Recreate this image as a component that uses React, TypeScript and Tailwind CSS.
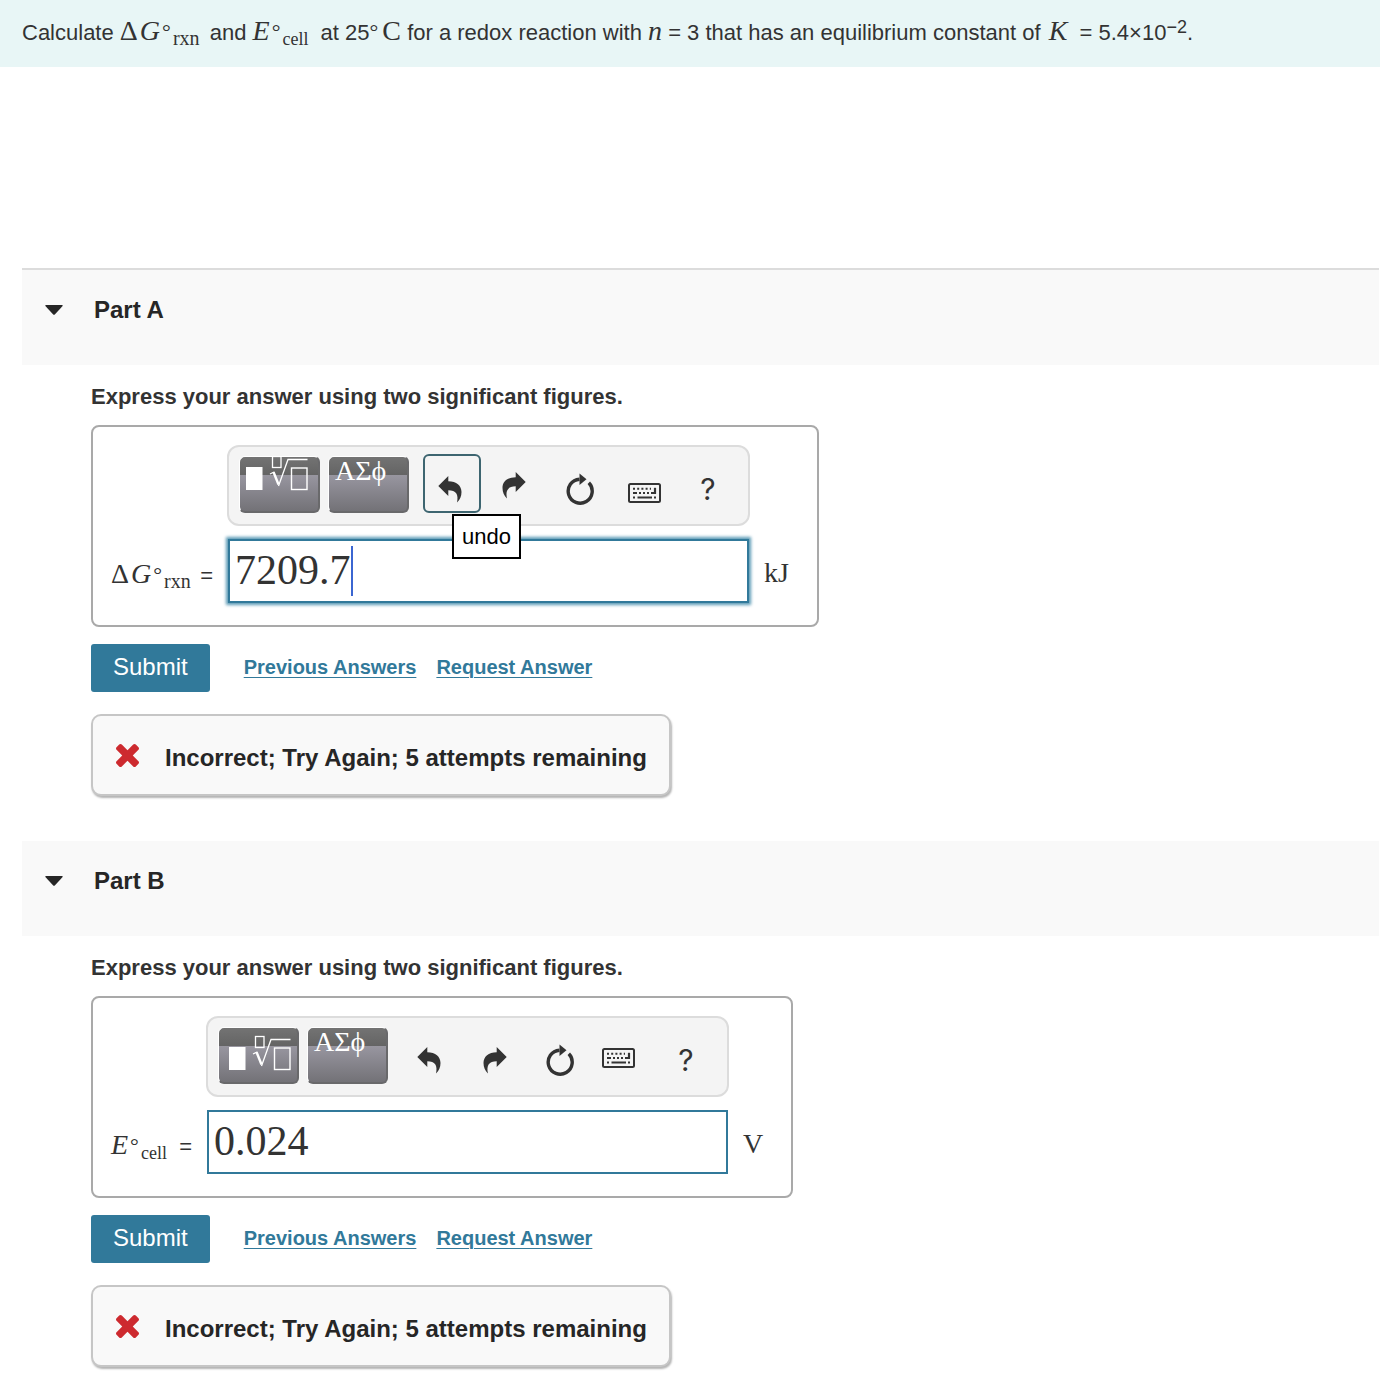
import React, { useState } from 'react';
import clsx from 'clsx';

interface Part {
  id: string;
  title: string;
  symbol: React.ReactNode;
  labelWidth: string;
  unit: string;
  answer: string;
  focused: boolean;
  toolGrid: string;
  redoPad: string;
  keyboardPad: string;
  templateAlign: string;
}

// ================= MATH =================
const Degree = () => <span className="align-[1px] text-[22px] leading-none">°</span>;

const DeltaG = () => (
  <span className="font-['Liberation_Serif',serif] text-[28px] leading-none whitespace-nowrap">
    <span className="mr-0.5">Δ</span>
    <i className="mr-0.5">G</i>
    <Degree />
    <span className="ml-0.5 align-[-5px] text-xl leading-none">rxn</span>
  </span>
);

const ECell = () => (
  <span className="font-['Liberation_Serif',serif] text-[28px] leading-none whitespace-nowrap">
    <i className="mr-0.5">E</i>
    <Degree />
    <span className="ml-0.5 align-[-5px] text-lg leading-none">cell</span>
  </span>
);

const Var = ({ children }: { children: React.ReactNode }) => (
  <i className="font-['Liberation_Serif',serif] text-[28px] leading-none">{children}</i>
);

// ================= ICONS =================
const TemplateIcon = () => (
  <svg width="62" height="36" viewBox="0 0 62 36" fill="none" stroke="#fff" className="shrink-0" aria-hidden="true">
    <rect x="0" y="12" width="16.5" height="23" fill="#fff" stroke="none" />
    <rect x="26.5" y="1.5" width="8.5" height="11" strokeWidth="1.3" />
    <path d="M24 19l4-2" strokeWidth="1.2" />
    <path d="M27.5 17l5 12.5" strokeWidth="2.4" />
    <path d="M32.5 31L42 4.5h19.5" strokeWidth="1.3" />
    <rect x="45.5" y="13" width="15.5" height="21.5" strokeWidth="1.4" />
  </svg>
);

const UndoIcon = ({ flip = false }: { flip?: boolean }) => (
  <svg width="24" height="27" viewBox="0 0 24 27" fill="#333" className={clsx(flip && '-scale-x-100')} aria-hidden="true">
    <path d="M0.3 10L10.3 0V5.2C18.5 5.4 23.5 9.5 23.5 16C23.5 20 22 23.5 19 26.5C20.8 18.5 18 14.3 10.3 14.3V20Z" />
  </svg>
);

const ResetIcon = () => (
  <svg width="28" height="32" viewBox="0 0 28 32" fill="none" aria-hidden="true">
    <path d="M22.8 9.8A12 12 0 1 1 13.5 6.2" stroke="#333" strokeWidth="3.4" />
    <path d="M13.5 0.5L20.5 6.2L13.5 12Z" fill="#333" />
  </svg>
);

const KeyboardIcon = () => (
  <svg width="33" height="20" viewBox="0 0 33 20" fill="none" stroke="#333" aria-hidden="true">
    <rect x="1" y="1" width="31" height="18" rx="1.5" strokeWidth="2" />
    <path d="M5 5.8h18" strokeWidth="2" strokeDasharray="2 2.2" />
    <path d="M5 10h4M11 10h2M15 10h2M19 10h2M23 10h5M5 14.5h2M9.5 14.5h14.5M26 14.5h2" strokeWidth="2" />
    <path d="M27 4.8v6" strokeWidth="2.2" />
  </svg>
);

const CrossIcon = () => (
  <svg width="23" height="23" viewBox="302 366 1188 1188" fill="#cd2a2f" aria-hidden="true">
    <path d="M1490 1322q0 40-28 68l-136 136q-28 28-68 28t-68-28l-294-294-294 294q-28 28-68 28t-68-28l-136-136q-28-28-28-68t28-68l294-294-294-294q-28-28-28-68t28-68l136-136q28-28 68-28t68 28l294 294 294-294q28-28 68-28t68 28l136 136q28 28 28 68t-28 68l-294 294 294 294q28 28 28 68z" />
  </svg>
);

// ================= TOOLBAR =================
const paletteButton =
  'flex h-[57px] w-[81px] shrink-0 overflow-hidden rounded-md border-t border-l border-white border-r-2 border-b-2 border-r-[#69696b] border-b-[#69696b] bg-[linear-gradient(#737373_0,#646464_18px,#9896a0_18px,#737277_100%)] text-white';

const toolButton = 'relative flex h-[59px] w-[58px] items-end justify-center rounded-md';

const Toolbar = ({ part }: { part: Part }) => (
  <div className="flex h-[81px] items-center rounded-xl border-2 border-[#dcdcdc] bg-[#f4f4f4] pb-0.5 pl-2.5">
    <button type="button" aria-label="Templates" className={clsx(paletteButton, part.templateAlign)}>
      <TemplateIcon />
    </button>
    <button
      type="button"
      aria-label="Symbols"
      className={clsx(paletteButton, "ml-2 items-start pl-1.5 font-['Liberation_Serif',serif] text-[28px] leading-7")}
    >
      ΑΣϕ
    </button>

    <div className={clsx('ml-[11px] grid justify-items-center pb-0.5', part.toolGrid)}>
      <button
        type="button"
        aria-label="undo"
        className={clsx(toolButton, 'border-2 pr-1 pb-2', part.focused ? 'border-[#3d6570]' : 'border-transparent')}
      >
        <UndoIcon />
        {part.focused && (
          <span
            role="tooltip"
            className="absolute top-[58px] left-[27px] z-10 border-2 border-black bg-white px-2 py-1.5 text-[22px] leading-[29px] text-black"
          >
            undo
          </span>
        )}
      </button>
      <button type="button" aria-label="redo" className={clsx(toolButton, 'pr-1', part.redoPad)}>
        <UndoIcon flip />
      </button>
      <button type="button" aria-label="reset" className={clsx(toolButton, 'pb-2')}>
        <ResetIcon />
      </button>
      <button type="button" aria-label="keyboard shortcuts" className={clsx(toolButton, part.keyboardPad)}>
        <KeyboardIcon />
      </button>
      <button
        type="button"
        aria-label="help"
        className={clsx(toolButton, "pb-1 font-['Inter',sans-serif] text-[30px] leading-10")}
      >
        ?
      </button>
    </div>
  </div>
);

// ================= PART =================
const PartSection = ({ part }: { part: Part }) => {
  const [open, setOpen] = useState(true);
  const [answer, setAnswer] = useState(part.answer);
  const inputId = `answer-${part.id}`;

  return (
    <section className="mr-px ml-[22px]">
      <h2 className="h-[95px] bg-[#f9f9f9] pt-[26px] pl-[23px]">
        <button
          type="button"
          aria-expanded={open}
          onClick={() => setOpen(!open)}
          className="flex items-center gap-[31px] text-2xl leading-7 font-bold text-[#262626]"
        >
          <svg width="18" height="10" viewBox="0 0 18 10" fill="#262626" aria-hidden="true">
            <path d="M1 0h16q1.2 0.4 0.4 1.3L9.8 9.4q-0.8 0.7-1.6 0L0.6 1.3Q-0.2 0.4 1 0z" />
          </svg>
          {part.title}
        </button>
      </h2>

      {open && (
        <div className="flex flex-col items-start pb-[45px] pl-[69px]">
          <p className="pt-4 pb-3 text-[22px] leading-8 font-bold">
            Express your answer using two significant figures.
          </p>

          <div className="flex items-end rounded-lg border-2 border-[#a9a9a9] pt-[18px] pr-7 pb-[22px] pl-[18px]">
            <label htmlFor={inputId} className={clsx('flex h-16 items-baseline justify-between pt-[21px] pr-3.5', part.labelWidth)}>
              {part.symbol}
              <span className="text-[22px] leading-none">=</span>
            </label>
            <div className="flex w-[523px] flex-col gap-[13px]">
              <Toolbar part={part} />
              <div className="relative mx-px">
                <input
                  id={inputId}
                  type="text"
                  value={answer}
                  onChange={(e) => setAnswer(e.target.value)}
                  className={clsx(
                    "block h-16 w-full border-2 border-[#31799a] bg-white pb-0.5 pl-[5px] font-['Liberation_Serif',serif] text-[42px] text-[#333] outline-none",
                    part.focused && 'shadow-[0_0_3px_2px_#5b9ab5]'
                  )}
                />
                {part.focused && <span className="absolute top-[7px] left-[123px] h-[50px] w-0.5 bg-[#3b66d1]" />}
              </div>
            </div>
            <span className="flex h-16 items-center pt-1 pl-3.5 font-['Liberation_Serif',serif] text-[28px]">{part.unit}</span>
          </div>

          <div className="mt-[17px] flex items-center text-xl font-bold text-[#31799a]">
            <button type="button" className="h-12 rounded-[3px] bg-[#31799a] px-[22px] pb-0.5 text-2xl font-normal text-white">
              Submit
            </button>
            <a href="#previous" className="ml-[34px] pb-0.5 underline decoration-1 underline-offset-[3px]">
              Previous Answers
            </a>
            <a href="#request" className="ml-5 pb-0.5 underline decoration-1 underline-offset-[3px]">
              Request Answer
            </a>
          </div>

          <div className="mt-[22px] flex h-[82px] items-center gap-[26px] rounded-[10px] border-2 border-[#c6c6c6] bg-[#f9f9f9] pr-[22px] pl-[23px] shadow-[1px_2px_2px_#b5b5b5]">
            <CrossIcon />
            <strong className="pt-1.5 text-2xl text-[#262626]">Incorrect; Try Again; 5 attempts remaining</strong>
          </div>
        </div>
      )}
    </section>
  );
};

const parts: Part[] = [
  {
    id: 'a',
    title: 'Part A',
    symbol: <DeltaG />,
    labelWidth: 'w-[116px]',
    unit: 'kJ',
    answer: '7209.7',
    focused: true,
    toolGrid: 'grid-cols-[64px_64px_64px_64px_64px]',
    redoPad: 'pb-3.5',
    keyboardPad: 'pb-2.5',
    templateAlign: 'items-center pb-[22px] pl-1.5',
  },
  {
    id: 'b',
    title: 'Part B',
    symbol: <ECell />,
    labelWidth: 'w-[95px]',
    unit: 'V',
    answer: '0.024',
    focused: false,
    toolGrid: 'grid-cols-[64px_67px_60px_56px_80px]',
    redoPad: 'pb-2.5',
    keyboardPad: 'pb-4',
    templateAlign: 'items-center pb-1 pl-2.5',
  },
];

const App = () => (
  <main className="min-h-screen bg-white font-['Liberation_Sans',Arial,sans-serif] text-[#333]">
    <header className="bg-[#e8f6f6] px-[22px] pt-[17px] pb-[18px] text-[22px] leading-8">
      Calculate <DeltaG /> <span className="ml-1">and</span> <ECell /> <span className="ml-1.5">at 25</span>
      <span className="font-['Liberation_Serif',serif] text-[28px] leading-none">
        <Degree />
        <span className="ml-1">C</span>
      </span>{' '}
      for a redox reaction with <Var>n</Var> = 3 that has an equilibrium constant of{' '}
      <span className="ml-0.5">
        <Var>K</Var>
      </span>{' '}
      <span className="ml-1.5">
        = 5.4×10<span className="align-[7px] text-lg leading-none">−2</span>.
      </span>
    </header>

    <div className="mt-[201px] [&>section:first-child]:border-t-2 [&>section:first-child]:border-[#dcdcdc]">
      {parts.map((part) => (
        <PartSection key={part.id} part={part} />
      ))}
    </div>
  </main>
);

export default App;
